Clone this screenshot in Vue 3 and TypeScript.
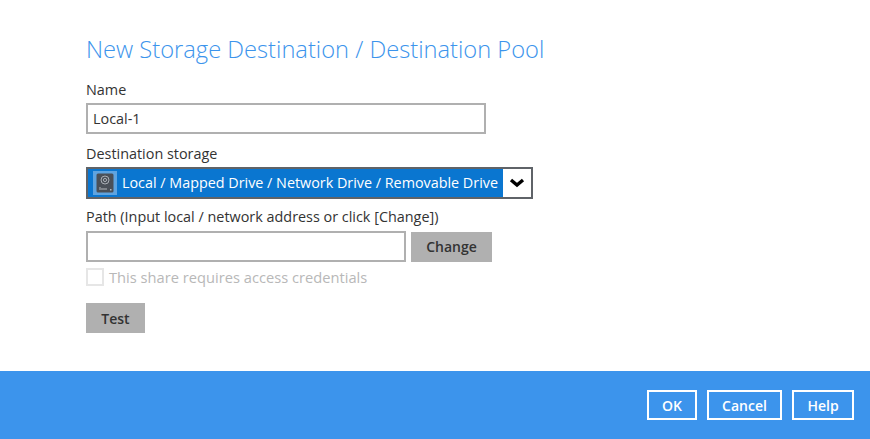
<script setup lang="ts">
const title: string = 'New Storage Destination / Destination Pool'
</script>

<template>
  <div class="page">
    <main class="content">
      <h1 class="title">{{ title }}</h1>
      <label class="label name-label">Name</label>
      <div class="input name-input">Local-1</div>
      <label class="label dest-label">Destination storage</label>
      <div class="select">
        <div class="selected">
          <span class="icon-box">
            <svg width="20" height="20" viewBox="0 0 20 20">
              <rect x="1.5" y="0.5" width="17" height="19" rx="1.5" fill="#4a5058" />
              <circle cx="10" cy="7" r="4" fill="none" stroke="#a9aeb4" stroke-width="1" />
              <circle cx="10" cy="7" r="1.6" fill="none" stroke="#a9aeb4" stroke-width="1" />
              <path d="M5 14v3M7 15v2M9 15v2M11 15v2" stroke="#b4b8bc" stroke-width="1" fill="none" />
              <rect x="15" y="16" width="1.5" height="1.5" fill="#b4b8bc" />
            </svg>
          </span>
          <span class="selected-text">Local / Mapped Drive / Network Drive / Removable Drive</span>
        </div>
        <div class="arrow">
          <svg width="16" height="10" viewBox="0 0 16 10">
            <path d="M2 2 L8 7 L14 2" fill="none" stroke="#000" stroke-width="3.4" />
          </svg>
        </div>
      </div>
      <label class="label path-label">Path (Input local / network address or click [Change])</label>
      <div class="path-row">
        <div class="input path-input"></div>
        <button class="gray-btn change">Change</button>
      </div>
      <div class="check-row">
        <span class="checkbox"></span>
        <span class="check-text">This share requires access credentials</span>
      </div>
      <button class="gray-btn test">Test</button>
    </main>
    <footer class="footer">
      <button class="blue-btn ok">OK</button>
      <button class="blue-btn cancel">Cancel</button>
      <button class="blue-btn help">Help</button>
    </footer>
  </div>
</template>

<style scoped>
.page {
  width: 870px;
  height: 439px;
  display: flex;
  flex-direction: column;
  background: #fff;
  font-family: "Open Sans", "Noto Sans", sans-serif;
  color: #333;
  overflow: hidden;
}
.content {
  flex: 1;
  padding: 33px 0 0 86px;
  display: flex;
  flex-direction: column;
  align-items: flex-start;
}
.title {
  margin: 0;
  font-size: 23.7px;
  line-height: 32px;
  font-weight: 300;
  color: #3c94ec;
}
.label {
  display: block;
  font-size: 14.4px;
  line-height: 20px;
  color: #333;
}
.name-label { margin-top: 15px; }
.input {
  box-sizing: border-box;
  height: 31px;
  border: 2px solid #b0b0b0;
  background: #fff;
  font-size: 14.4px;
  line-height: 27px;
  padding-left: 5px;
  color: #333;
}
.name-input { width: 400px; margin-top: 3px; }
.dest-label { margin-top: 10px; }
.select {
  box-sizing: border-box;
  width: 447px;
  height: 32px;
  margin-top: 3px;
  border: 2px solid #5f6368;
  display: flex;
}
.selected {
  flex: 1;
  background: #0a76d0;
  display: flex;
  align-items: center;
  padding-left: 5px;
}
.icon-box {
  box-sizing: border-box;
  width: 24px;
  height: 24px;
  background: #5fa4e0;
  display: flex;
  align-items: center;
  justify-content: center;
}
.selected-text {
  margin-left: 5px;
  padding-bottom: 2px;
  color: #fff;
  font-size: 14.35px;
  white-space: nowrap;
}
.arrow {
  width: 28px;
  background: #fff;
  display: flex;
  align-items: center;
  justify-content: center;
}
.path-label { margin-top: 8px; }
.path-row {
  display: flex;
  gap: 5px;
  margin-top: 4px;
}
.path-input { width: 320px; }
.gray-btn {
  border: 0;
  padding: 0;
  background: #b0b0b0;
  font-family: inherit;
  font-size: 14px;
  font-weight: 600;
  color: #333;
}
.change { width: 81px; height: 30px; align-self: flex-end; padding-bottom: 2px; }
.check-row {
  display: flex;
  align-items: center;
  gap: 5px;
  margin-top: 5px;
}
.checkbox {
  box-sizing: border-box;
  width: 18px;
  height: 18px;
  border: 2px solid #e6e6e6;
  background: #fff;
}
.check-text {
  font-size: 14.68px;
  line-height: 20px;
  color: #b8b8b8;
}
.test { width: 59px; height: 30px; margin-top: 16px; }
.footer {
  height: 68px;
  background: #3c94ec;
  display: flex;
  align-items: center;
  justify-content: flex-end;
  padding-right: 16px;
  gap: 10px;
}
.blue-btn {
  box-sizing: border-box;
  height: 30px;
  border: 2px solid #fff;
  background: transparent;
  color: #fff;
  font-family: inherit;
  font-size: 14px;
  font-weight: 600;
  padding: 0;
}
.ok { width: 50px; }
.cancel { width: 75px; }
.help { width: 62px; }
</style>
